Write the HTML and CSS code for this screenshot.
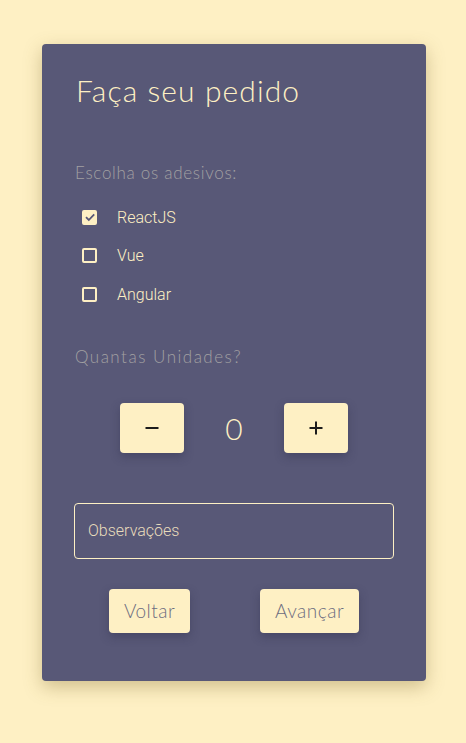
FILE: index.html
```html
<!DOCTYPE html>
<html lang="pt-BR">
<head>
<meta charset="utf-8">
<title>Faça seu pedido</title>
<link rel="stylesheet" href="styles.css">
</head>
<body>
<div class="page">
  <form class="card">
    <h1 class="title">Faça seu pedido</h1>
    <p class="section-label">Escolha os adesivos:</p>
    <ul class="options">
      <li class="option">
        <span class="box checked">
          <svg viewBox="0 0 14 14" width="14" height="14"><path d="M3 7.2 L5.8 10 L11.2 4.4" fill="none" stroke="#585877" stroke-width="1.8"/></svg>
        </span>
        <span class="option-label">ReactJS</span>
      </li>
      <li class="option">
        <span class="box"></span>
        <span class="option-label">Vue</span>
      </li>
      <li class="option">
        <span class="box"></span>
        <span class="option-label">Angular</span>
      </li>
    </ul>
    <p class="section-label qty-label">Quantas Unidades?</p>
    <div class="qty">
      <button type="button" class="qty-btn"><svg viewBox="0 0 16 16" width="16" height="16"><path d="M1.5 8 H14.5" stroke="#1c1c1c" stroke-width="2"/></svg></button>
      <span class="qty-value">0</span>
      <button type="button" class="qty-btn"><svg viewBox="0 0 16 16" width="16" height="16"><path d="M1.5 8 H14.5 M8 1.5 V14.5" stroke="#1c1c1c" stroke-width="2"/></svg></button>
    </div>
    <div class="field">Observações</div>
    <div class="actions">
      <button type="button" class="nav-btn">Voltar</button>
      <button type="button" class="nav-btn">Avançar</button>
    </div>
  </form>
</div>
</body>
</html>
```

FILE: styles.css
```css
* { box-sizing: border-box; }
html, body { margin: 0; padding: 0; }
body {
  background: #fef0c4;
  font-family: Roboto, "Liberation Sans", sans-serif;
  width: 466px;
  height: 743px;
  overflow: hidden;
}
.page {
  display: flex;
  justify-content: flex-start;
  padding: 44px 0 0 42px;
}
.card {
  width: 384px;
  height: 637px;
  background: #585877;
  border-radius: 4px;
  box-shadow: 0 6px 18px rgba(120, 100, 40, 0.35);
  padding: 0 32px;
  display: flex;
  flex-direction: column;
}
.title {
  margin: 27px 0 0 2px;
  font-family: Lato, sans-serif;
  font-weight: 300;
  font-size: 30px;
  line-height: 38px;
  color: #fef0c4;
  letter-spacing: 1.1px;
}
.section-label {
  margin: 52px 0 0 1px;
  font-family: Lato, sans-serif;
  font-weight: 300;
  font-size: 17px;
  line-height: 24px;
  color: #a2a0a2;
  letter-spacing: 0.7px;
}
.options {
  list-style: none;
  margin: 13px 0 0 0;
  padding: 0 0 0 8px;
  display: flex;
  flex-direction: column;
}
.option {
  display: flex;
  align-items: center;
  height: 38.5px;
}
.box {
  width: 15px;
  height: 15px;
  border: 2px solid #fef0c4;
  border-radius: 2px;
  display: flex;
  align-items: center;
  justify-content: center;
  margin-right: 20px;
}
.box.checked { background: #fef0c4; }
.box.checked svg { flex: none; }
.option-label {
  font-size: 16px;
  font-weight: 300;
  color: #fef0c4;
}
.qty-label { margin-top: 31px; letter-spacing: 1.5px; }
.qty {
  display: flex;
  justify-content: center;
  align-items: center;
  margin-top: 34px;
}
.qty-btn {
  width: 64px;
  height: 50px;
  border: none;
  border-radius: 4px;
  background: #fef0c4;
  box-shadow: 0 4px 10px rgba(40, 40, 70, 0.35);
  display: flex;
  align-items: center;
  justify-content: center;
  padding: 0;
}
.qty-value {
  width: 100px;
  text-align: center;
  font-family: Lato, sans-serif;
  font-weight: 300;
  font-size: 30px;
  color: #fef0c4;
}
.field {
  margin-top: 50px;
  height: 56px;
  flex: none;
  border: 1px solid #fef0c4;
  border-radius: 4px;
  padding: 0 13px;
  display: flex;
  align-items: center;
  font-size: 16px;
  font-weight: 300;
  color: #e8dcbc;
}
.actions {
  display: flex;
  justify-content: space-around;
  margin-top: 30px;
}
.nav-btn {
  height: 44px;
  border: none;
  border-radius: 4px;
  background: #fef0c4;
  box-shadow: 0 4px 10px rgba(40, 40, 70, 0.35);
  font-family: Lato, sans-serif;
  font-weight: 300;
  font-size: 19px;
  letter-spacing: 0.5px;
  color: #6c6c80;
  padding: 0 15px;
}
```
